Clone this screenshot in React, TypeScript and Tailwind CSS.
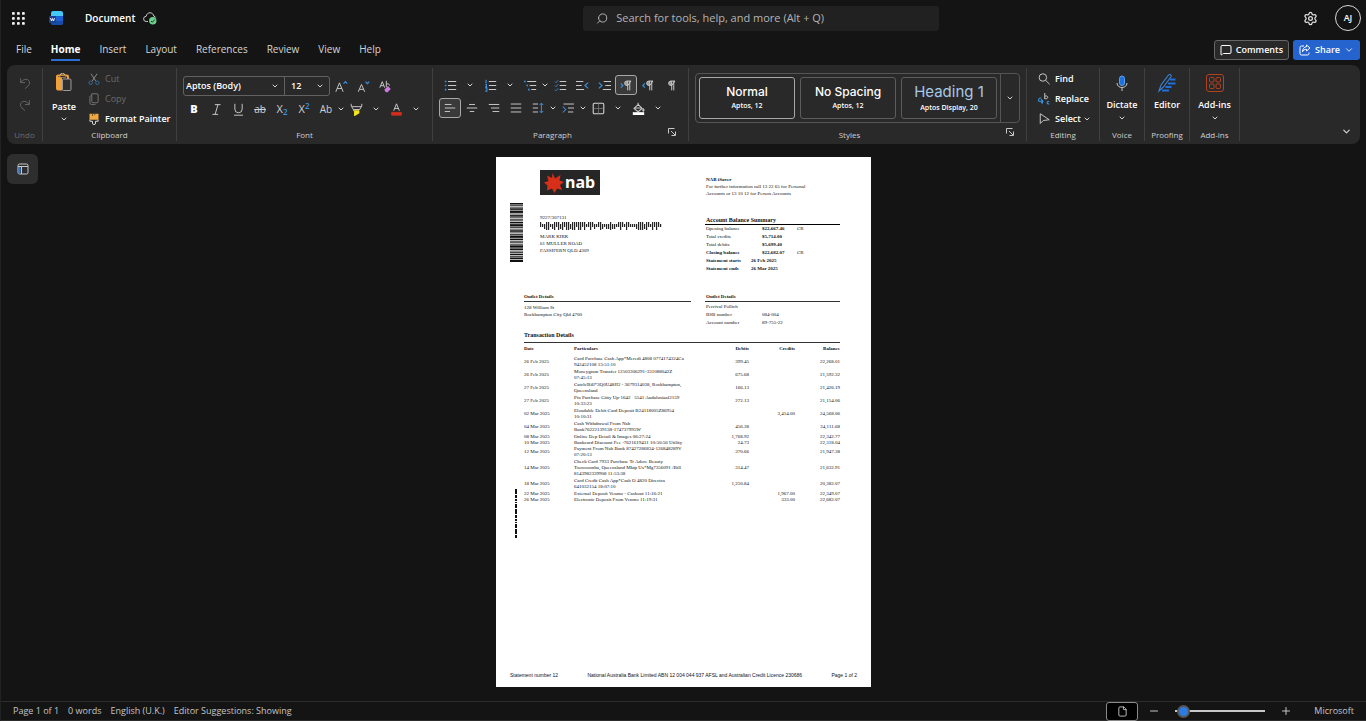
import React from 'react'
import { ChevronDown, Minus, Plus, Search, Settings, MessageSquare, File } from 'lucide-react'

type IconProps = { children: React.ReactNode; size?: number }

const Svg = ({ children, size = 16 }: IconProps) => (
  <svg width={size} height={size} viewBox="0 0 16 16" fill="none" stroke="#c8c8c8" strokeWidth="1" aria-hidden="true" className="shrink-0">
    {children}
  </svg>
)

const Chevron = () => <ChevronDown size={8} strokeWidth={3} className="shrink-0 text-[#d6d6d6]" />

const IconButton = ({ label, active, children }: { label: string; active?: boolean; children: React.ReactNode }) => (
  <button
    type="button"
    aria-label={label}
    className={
      active
        ? 'flex h-5 w-[22px] shrink-0 items-center justify-center rounded-[3px] border border-[#a8a8a8] bg-[#3a3a3a]'
        : 'flex h-5 w-[22px] shrink-0 items-center justify-center rounded-[3px]'
    }
  >
    {children}
  </button>
)

const More = ({ label, wide }: { label: string; wide?: boolean }) => (
  <button
    type="button"
    aria-label={label}
    className={wide ? 'flex h-5 w-[18px] items-center justify-center' : 'flex h-5 w-2 items-center justify-center'}
  >
    <Chevron />
  </button>
)

type GroupProps = { label: string; width: string; dim?: boolean; launcher?: boolean; children: React.ReactNode }

const Group = ({ label, width, dim, launcher, children }: GroupProps) => (
  <section className={`${width} relative flex shrink-0 flex-col border-r border-[#404040]`}>
    <div className="min-h-0 flex-1">{children}</div>
    <div className={`text-center text-[8px] leading-3 ${dim ? 'text-[#6b6b6b]' : 'text-[#d0d0d0]'} ${launcher ? 'pr-4' : ''}`}>
      {label}
    </div>
    {launcher && (
      <button type="button" aria-label={`${label} settings`} className="absolute right-3 bottom-[5px]">
        <svg width="8" height="8" viewBox="0 0 8 8" fill="none" stroke="#c8c8c8" aria-hidden="true">
          <path d="M.5 5.5v-5h6M3 3l4 4M7.5 3.5v4h-4" />
        </svg>
      </button>
    )}
  </section>
)

const Header = () => (
  <header className="flex h-9 items-center">
    <div className="flex flex-1 items-center">
      <button type="button" aria-label="App launcher" className="ml-[11px]">
        <svg width="13" height="13" viewBox="0 0 13 13" fill="#f0f0f0" aria-hidden="true">
          {[0, 5, 10].map((y) => [0, 5, 10].map((x) => <rect key={`${x}-${y}`} x={x} y={y} width="2.8" height="2.8" rx=".9" />))}
        </svg>
      </button>
      <svg className="ml-6" width="14" height="16" viewBox="0 0 14 16" aria-hidden="true">
        <rect x="2" y="1" width="12" height="14" rx="2.5" fill="#1b62d6" />
        <path d="M2 6V3.5A2.5 2.5 0 0 1 4.500 1H11.500A2.500 2.500 0 0 1 14 3.500V6z" fill="#45c8f5" />
        <path d="M2 11h12v1.500A2.500 2.500 0 0 1 11.500 15h-7A2.500 2.500 0 0 1 2 12.500z" fill="#174ca8" />
        <rect y="6" width="7" height="7" rx="1" fill="#1d3f8f" />
        <path d="M1.500 8l1 3 1-2.500 1 2.500 1-3" stroke="#fff" strokeWidth=".9" fill="none" />
      </svg>
      <span className="ml-[22px] text-[10px] font-semibold text-white">Document</span>
      <svg className="ml-2" width="14" height="14" viewBox="0 0 14 14" fill="none" aria-hidden="true">
        <path d="M5 10.500H3.200a2.600 2.600 0 0 1 0-5.200C3.500 3 5 1.800 7 1.800s3.500 1.200 3.800 3.400c1 .1 1.700.6 2 1.300" stroke="#c8c8c8" />
        <circle cx="9.800" cy="9.800" r="3.700" fill="#6fd08c" />
        <path d="M8 10l1.300 1.300 2.500-2.800" stroke="#173a22" />
      </svg>
    </div>
    <label className="flex h-[25px] w-[356px] items-center gap-2 rounded-[3px] bg-[#212121] pl-[13px]">
      <Search size={13} strokeWidth={1.8} className="-scale-x-100 text-[#bdbdbd]" />
      <input
        type="text"
        aria-label="Search"
        placeholder="Search for tools, help, and more (Alt + Q)"
        className="w-full bg-transparent text-[11px] text-white outline-none placeholder:text-[#b4b4b4]"
      />
    </label>
    <div className="flex w-[427px] items-center justify-end gap-[17px] pr-[5px]">
      <button type="button" aria-label="Settings">
        <Settings size={15} strokeWidth={2} className="text-[#e0e0e0]" />
      </button>
      <button type="button" className="h-[26px] w-[26px] rounded-full border border-[#d8d8d8] text-[9px] font-semibold text-white">
        AJ
      </button>
    </div>
  </header>
)

const tabs = ['File', 'Home', 'Insert', 'Layout', 'References', 'Review', 'View', 'Help']

const Tabs = () => (
  <div className="flex h-[27px] items-center pr-[6px] pl-[15px]">
    <nav className="flex flex-1 gap-[19px] self-start text-[10px] leading-[14px] text-[#d6d6d6]">
      {tabs.map((tab) => (
        <a
          key={tab}
          href="#"
          className={tab === 'Home' ? 'border-b-2 border-[#2b6fd6] pt-[6px] pb-[3px] font-bold text-white' : 'border-b-2 border-transparent pt-[6px] pb-[3px]'}
        >
          {tab}
        </a>
      ))}
    </nav>
    <button type="button" className="flex h-5 items-center gap-1 rounded-[3px] border border-[#666] bg-[#292929] px-[5px] text-[9px] font-semibold text-white">
      <MessageSquare size={12} strokeWidth={2} />
      Comments
    </button>
    <button type="button" className="ml-1 flex h-5 items-center gap-1 rounded-[3px] bg-[#2564cf] px-[6px] text-[9px] font-semibold text-white">
      <svg width="12" height="12" viewBox="0 0 12 12" fill="none" stroke="#fff" aria-hidden="true">
        <path d="M5 2H2.500A1.500 1.500 0 0 0 1 3.500v6A1.500 1.500 0 0 0 2.500 11h6A1.500 1.500 0 0 0 10 9.500V8.500M7.500 1l3.500 3-3.500 3V5.300C5.500 5.300 4.300 6 3.500 7.800 3.700 4.800 5 3 7.500 2.700z" />
      </svg>
      Share
      <ChevronDown size={10} strokeWidth={2} />
    </button>
  </div>
)

const UndoGroup = () => (
  <Group label="Undo" width="w-9" dim>
    <div className="flex flex-col items-center gap-2 pt-2">
      <button type="button" aria-label="Undo">
        <Svg size={14}>
          <path d="M3 2.500v5h5M3.300 7.200C6 3.500 10 3 12 5s1.500 4.500-.500 6.300L8 14.500" stroke="#6b6b6b" />
        </Svg>
      </button>
      <button type="button" aria-label="Redo">
        <Svg size={14}>
          <path d="M13 2.500v5H8M12.700 7.200C10 3.500 6 3 4 5s-1.500 4.500.500 6.300L8 14.500" stroke="#6b6b6b" />
        </Svg>
      </button>
    </div>
  </Group>
)

const ClipboardGroup = () => (
  <Group label="Clipboard" width="w-[134px]">
    <div className="flex">
      <button type="button" className="flex w-[42px] flex-col items-center pt-[5px] text-[9px] leading-4 font-semibold text-white">
        <svg width="16" height="19" viewBox="0 0 16 19" fill="none" aria-hidden="true">
          <path d="M6.500 16.500H2A1 1 0 0 1 1 15.500v-12a1 1 0 0 1 1-1h9a1 1 0 0 1 1 1V6" stroke="#efa23b" strokeWidth="2" />
          <path d="M2 4h4v12H2z" fill="#efa23b" />
          <path d="M4.500 2a2 2 0 0 1 4 0" stroke="#e8c79a" />
          <path d="M4 2.500h5.500v2H4z" fill="#292929" stroke="#e5a455" strokeWidth=".6" />
          <rect x="6.500" y="6" width="8.500" height="11.500" rx="1" fill="#303030" stroke="#9a9a9a" />
        </svg>
        <span className="mt-[7px]">Paste</span>
        <Chevron />
      </button>
      <div className="flex flex-col pt-px pl-[3px] text-[9px] leading-5">
        <button type="button" disabled className="flex items-center gap-[5px] text-[#6b6b6b]">
          <Svg size={12}>
            <path d="M4 1l6.500 10M12 1L5.500 11" stroke="#8a8a8a" strokeWidth="1.300" />
            <circle cx="3.500" cy="13" r="2.300" stroke="#3b6a9c" strokeWidth="1.300" />
            <circle cx="12.500" cy="13" r="2.300" stroke="#3b6a9c" strokeWidth="1.300" />
          </Svg>
          Cut
        </button>
        <button type="button" disabled className="flex items-center gap-[5px] text-[#6b6b6b]">
          <Svg size={12}>
            <path d="M5 1h7a1.500 1.500 0 0 1 1.500 1.500v9A1.500 1.500 0 0 1 12 13H6.500A1.500 1.500 0 0 1 5 11.500zM5 3.500c-1.500 0-2.500.5-2.500 2V13A2.500 2.500 0 0 0 5 15.500h5" stroke="#747474" strokeWidth="1.300" />
          </Svg>
          Copy
        </button>
        <button type="button" className="flex items-center gap-[5px] font-semibold whitespace-nowrap text-white">
          <Svg size={12}>
            <path d="M2 1h12v8H2z" fill="#f0a840" stroke="none" />
            <path d="M6 1v3M9 1v2" stroke="#5c3b0c" />
            <path d="M2.500 9v2h3.500v3.500l2 1 2-1V11h3.500V9" stroke="#dcdcdc" strokeWidth="1.300" />
          </Svg>
          Format Painter
        </button>
      </div>
    </div>
  </Group>
)

const FontGroup = () => (
  <Group label="Font" width="w-[256px]">
    <div className="pt-2 pl-[6px]">
      <div className="flex items-center">
        <div className="flex rounded-[3px] border border-[#616161] text-[9px] font-semibold text-white">
          <label className="relative flex items-center">
            <select aria-label="Font name" className="h-[18px] w-[100px] appearance-none bg-transparent pl-[2px] outline-none">
              <option>Aptos (Body)</option>
            </select>
            <span className="pointer-events-none absolute right-[5px]"><Chevron /></span>
          </label>
          <label className="relative flex items-center border-l border-[#616161]">
            <select aria-label="Font size" className="h-[18px] w-[44px] appearance-none bg-transparent pl-[6px] outline-none">
              <option>12</option>
            </select>
            <span className="pointer-events-none absolute right-[5px]"><Chevron /></span>
          </label>
        </div>
        <div className="flex">
          <IconButton label="Grow font">
            <Svg size={13}>
              <path d="M1 14.500L5.500 3.500l4.500 11M2.700 10.500h5.600" strokeWidth="1.200" />
              <path d="M10.500 4.500l2.300-2.500 2.300 2.500" stroke="#3a93e0" strokeWidth="1.400" />
            </Svg>
          </IconButton>
          <IconButton label="Shrink font">
            <Svg size={13}>
              <path d="M1.500 14.500L5.500 5.500l4 9M3 11.500h5" strokeWidth="1.200" />
              <path d="M10.500 2l2.300 2.500L15.100 2" stroke="#3a93e0" strokeWidth="1.400" />
            </Svg>
          </IconButton>
          <IconButton label="Clear formatting">
            <Svg size={13}>
              <path d="M1 9.500L4 2l3 7.500M2 7h4M9 1v7.500M9 5.500c1-1.500 4-1 4 1.300" strokeWidth="1.200" />
              <path d="M6.500 12L11 7.500l3.500 3.500-4 4H8.500z" fill="#d07be0" stroke="none" />
            </Svg>
          </IconButton>
        </div>
      </div>
      <div className="mt-[3px] flex items-center text-[11px] leading-4 text-[#d0d0d0]">
        <IconButton label="Bold"><span className="font-extrabold text-white">B</span></IconButton>
        <IconButton label="Italic">
          <Svg size={13}><path d="M6 2h7M3 14h7M9.800 2L6.300 14" strokeWidth="1.200" /></Svg>
        </IconButton>
        <IconButton label="Underline">
          <Svg size={13}><path d="M3.500 1v6.500a4.500 4.500 0 0 0 9 0V1M2.500 15h11" strokeWidth="1.200" /></Svg>
        </IconButton>
        <IconButton label="Strikethrough"><span className="text-[10px] line-through">ab</span></IconButton>
        <IconButton label="Subscript"><span>X<sub className="text-[8px] font-semibold text-[#3a93e0]">2</sub></span></IconButton>
        <IconButton label="Superscript"><span>X<sup className="text-[8px] font-semibold text-[#3a93e0]">2</sup></span></IconButton>
        <IconButton label="Change case"><span className="text-[10px]">Ab</span></IconButton>
        <More label="Case options" />
        <IconButton label="Highlight">
          <Svg size={13}>
            <path d="M5 9h6.500v3.500L6 16H5z" fill="#f8e71c" stroke="none" />
            <path d="M1.500 1v2.500L4 8h8l2.500-4.500V1M2.500 4.500h11M4.500 8v2" strokeWidth="1.200" />
          </Svg>
        </IconButton>
        <More label="Highlight colors" wide />
        <IconButton label="Font color">
          <Svg size={13}>
            <path d="M4.500 9.500L8 1l3.500 8.500M5.700 6.700h4.600" strokeWidth="1.200" />
            <path d="M2 11.500h12V15H2z" fill="#d22e1c" stroke="#d22e1c" />
          </Svg>
        </IconButton>
        <More label="Font colors" wide />
      </div>
    </div>
  </Group>
)

const Pilcrow = () => (
  <>
    <path d="M9.500 2.500h-1a2.700 2.700 0 0 0 0 5.500h1z" fill="#9a9a9a" stroke="none" />
    <path d="M9.500 14V2.500M12 14V2.500M13.500 2.500H8.500a2.700 2.700 0 0 0 0 5.500h1z" strokeWidth="1.200" />
  </>
)

const ParagraphGroup = () => (
  <Group label="Paragraph" width="w-[256px]" launcher>
    <div className="pt-[7px] pl-[6px]">
      <div className="flex items-center">
        <IconButton label="Bullets">
          <Svg size={13}>
            <path d="M5 3h10M5 8h10M5 13h10" strokeWidth="1.300" />
            <path d="M1 3h2M1 8h2M1 13h2" stroke="#3a93e0" strokeWidth="2" />
          </Svg>
        </IconButton>
        <More label="Bullet library" wide />
        <IconButton label="Numbering">
          <Svg size={13}>
            <path d="M6 3h9M6 8h9M6 13h9" strokeWidth="1.300" />
            <path d="M2.500 1v4M1.500 6.500h1.500v3H1.500M1.500 11h2v4h-2" stroke="#3a93e0" strokeWidth="1.400" />
          </Svg>
        </IconButton>
        <More label="Number library" wide />
        <IconButton label="Multilevel list">
          <Svg size={13}>
            <path d="M4 3h11M7 8h8M9 13h6" strokeWidth="1.300" />
            <path d="M0 3h2M3 8h2M5 13h2" stroke="#3a93e0" strokeWidth="2" />
          </Svg>
        </IconButton>
        <More label="List library" />
        <IconButton label="Checklist">
          <Svg size={13}>
            <path d="M7 3h8M7 8h8M7 13h8" strokeWidth="1.300" />
            <path d="M1 3l1.500 1.500L5 1.500M1 8l1.500 1.500L5 6.500M1 13l1.500 1.500L5 11.500" stroke="#3a93e0" />
          </Svg>
        </IconButton>
        <IconButton label="Decrease indent">
          <Svg size={13}>
            <path d="M0 3h9M0 8h7M0 13h10" strokeWidth="1.300" />
            <path d="M15 4.500L11 8l4 3.500" stroke="#3a93e0" strokeWidth="1.400" />
          </Svg>
        </IconButton>
        <IconButton label="Increase indent">
          <Svg size={13}>
            <path d="M7 3h9M9 8h7M6 13h10" strokeWidth="1.300" />
            <path d="M1 4.500L5 8l-4 3.500" stroke="#3a93e0" strokeWidth="1.400" />
          </Svg>
        </IconButton>
        <IconButton label="Left to right" active>
          <Svg size={13}>
            <Pilcrow />
            <path d="M1 5.500L3.500 8 1 10.500" stroke="#3a93e0" strokeWidth="1.400" />
          </Svg>
        </IconButton>
        <IconButton label="Right to left">
          <Svg size={13}>
            <Pilcrow />
            <path d="M3.500 5.500L1 8l2.500 2.500" stroke="#3a93e0" strokeWidth="1.400" />
          </Svg>
        </IconButton>
        <IconButton label="Show marks"><Svg size={13}><Pilcrow /></Svg></IconButton>
      </div>
      <div className="mt-[3px] flex items-center">
        <IconButton label="Align left" active>
          <Svg size={12}><path d="M1 3.300h9M1 8h14M1 12.700h7" strokeWidth="1.300" /></Svg>
        </IconButton>
        <IconButton label="Align center">
          <Svg size={12}><path d="M4 3.300h8M1 8h14M5 12.700h6" strokeWidth="1.300" /></Svg>
        </IconButton>
        <IconButton label="Align right">
          <Svg size={12}><path d="M6 12.700h9M1 3.300h14M4 8h11" strokeWidth="1.300" /></Svg>
        </IconButton>
        <IconButton label="Justify">
          <Svg size={12}><path d="M1 2.700h14M1 8h14M1 13.300h14" strokeWidth="1.300" /></Svg>
        </IconButton>
        <IconButton label="Line spacing">
          <Svg size={12}>
            <path d="M1 2.700h7M1 8h7M1 13.300h7" strokeWidth="1.300" />
            <path d="M12.500 1.500v13M10 4l2.500-2.500L15 4M10 12l2.500 2.500L15 12" stroke="#3a93e0" strokeWidth="1.300" />
          </Svg>
        </IconButton>
        <More label="Spacing options" />
        <IconButton label="Special indent">
          <Svg size={12}>
            <path d="M2 2.700h14M8 8h8M8 13.300h7" strokeWidth="1.300" />
            <path d="M1 6l4 4-4 4" stroke="#3a93e0" strokeWidth="1.400" />
          </Svg>
        </IconButton>
        <More label="Indent options" />
        <IconButton label="Borders">
          <Svg size={13}>
            <rect x="1.500" y="1.500" width="13" height="13" rx="1.500" stroke="#d8d8d8" strokeWidth="1.300" />
            <path d="M8 2v12M2 8h12" stroke="#777" />
          </Svg>
        </IconButton>
        <More label="Border options" wide />
        <IconButton label="Shading">
          <Svg size={13}>
            <path d="M7.500 1v4M7.500 3l5 5-5 4-5-4zM3.500 7.500h8" strokeWidth="1.300" />
            <path d="M14 8c1.500 2 1 3.500 0 3.500s-1.500-1.500 0-3.500" fill="#c8c8c8" />
            <path d="M1 12.500h14V16H1z" fill="#fff" stroke="none" />
          </Svg>
        </IconButton>
        <More label="Shading colors" wide />
      </div>
    </div>
  </Group>
)

const StylesGroup = () => (
  <Group label="Styles" width="w-[338px]" launcher>
    <div className="mx-[6px] mt-[5px] flex rounded-[4px] border border-[#555]">
      <div className="flex flex-1 gap-[5px] p-[3px] text-white">
        <button type="button" className="flex h-[42px] w-24 flex-col items-center justify-center rounded-[3px] border border-[#a8a8a8]">
          <span className="font-['Inter',sans-serif] text-[12px] leading-4 font-medium">Normal</span>
          <span className="text-[7px] leading-3 font-semibold">Aptos, 12</span>
        </button>
        <button type="button" className="flex h-[42px] w-24 flex-col items-center justify-center rounded-[3px] border border-[#5c5c5c]">
          <span className="font-['Inter',sans-serif] text-[12px] leading-4 font-medium whitespace-nowrap">No Spacing</span>
          <span className="text-[7px] leading-3 font-semibold">Aptos, 12</span>
        </button>
        <button type="button" className="flex h-[42px] w-24 flex-col items-center justify-center rounded-[3px] border border-[#5c5c5c]">
          <span className="font-['Inter',sans-serif] text-[15px] leading-5 text-[#a5c9e8]">Heading 1</span>
          <span className="text-[7px] leading-3 font-semibold">Aptos Display, 20</span>
        </button>
      </div>
      <button type="button" aria-label="More styles" className="flex w-[19px] items-center justify-center border-l border-[#555]">
        <Chevron />
      </button>
    </div>
  </Group>
)

const EditingGroup = () => (
  <Group label="Editing" width="w-[73px]">
    <div className="flex flex-col pt-px pl-[11px] text-[9px] leading-5 font-semibold text-white">
      <button type="button" className="flex items-center gap-[5px]">
        <Svg size={12}>
          <circle cx="6.500" cy="6" r="5" strokeWidth="1.300" />
          <path d="M10.200 9.800L15.500 15" strokeWidth="1.300" />
        </Svg>
        Find
      </button>
      <button type="button" className="flex items-center gap-[5px]">
        <Svg size={12}>
          <path d="M9 0v8M9 5c1-2 4-1 4 .800S10 8.500 9 7" strokeWidth="1.300" />
          <path d="M4.500 7C2 6 0 8.500 1 11h4.500M4 8.500L6.500 11 4 13.500M6 9v5M15 11.500c-3-1.500-4.500 3.500 0 3" stroke="#3a93e0" strokeWidth="1.400" />
        </Svg>
        Replace
      </button>
      <button type="button" className="flex items-center gap-[5px]">
        <Svg size={12}><path d="M3 1v13l4-4 8-1z" strokeWidth="1.300" strokeLinejoin="round" /></Svg>
        Select
        <span className="-ml-[3px]"><Chevron /></span>
      </button>
    </div>
  </Group>
)

const BigButton = ({ label, menu, children }: { label: string; menu?: boolean; children: React.ReactNode }) => (
  <button type="button" className="flex w-full flex-col items-center pt-[5px] text-[9px] leading-4 font-semibold whitespace-nowrap text-white">
    <span className="mb-1 flex h-5 items-center">{children}</span>
    {label}
    {menu && <span className="mt-px"><Chevron /></span>}
  </button>
)

const Ribbon = () => (
  <div className="mx-[6px] mt-[2px] flex rounded-lg bg-[#292929] py-[3px]">
    <div className="flex h-[73px] flex-1">
      <UndoGroup />
      <ClipboardGroup />
      <FontGroup />
      <ParagraphGroup />
      <StylesGroup />
      <EditingGroup />
      <Group label="Voice" width="w-[45px]">
        <BigButton label="Dictate" menu>
          <svg width="12" height="17" viewBox="0 0 12 17" fill="none" aria-hidden="true">
            <rect x="3.500" y="1" width="5" height="9.500" rx="2.500" fill="#1f6fdc" stroke="#59a2ec" />
            <path d="M1 8c0 6 10 6 10 0M6 12.500V16" stroke="#c8c8c8" />
          </svg>
        </BigButton>
      </Group>
      <Group label="Proofing" width="w-[45px]">
        <BigButton label="Editor">
          <svg width="20" height="20" viewBox="0 0 20 20" fill="none" stroke="#3a86dc" aria-hidden="true">
            <path d="M2 18L4 12 11.500 2c1-1.200 3.500 0 2.500 1.700L6.500 14z" strokeWidth="1.100" />
            <path d="M13 6.500h5.500M11 10.500h7.500M8.500 14h6M5 17.500h7" strokeWidth="2.200" stroke="#1f6fdc" />
          </svg>
        </BigButton>
      </Group>
      <Group label="Add-ins" width="w-[50px]">
        <BigButton label="Add-ins" menu>
          <svg width="18" height="18" viewBox="0 0 18 18" fill="none" stroke="#b5401f" aria-hidden="true">
            <rect x=".5" y=".5" width="17" height="17" rx="2.500" />
            <rect x="3.500" y="3.500" width="4.500" height="4.500" rx="1" />
            <rect x="10" y="3.500" width="4.500" height="4.500" rx="1" />
            <rect x="3.500" y="10" width="4.500" height="4.500" rx="1" />
            <rect x="10" y="10" width="4.500" height="4.500" rx="1" />
          </svg>
        </BigButton>
      </Group>
    </div>
    <button type="button" aria-label="Collapse ribbon" className="mr-2 mb-1 self-end">
      <ChevronDown size={11} strokeWidth={2.5} className="text-[#d6d6d6]" />
    </button>
  </div>
)

// f = full bar, u = upper half, d = lower half, t = short tracker
const postBars = 'utdfftdfufdfuffdffuffuftufudtufdtddfddtufutfutttdfffdfutfufut'

const PostBarcode = () => (
  <svg width="122" height="9" viewBox="0 0 122 9" fill="#222" aria-hidden="true">
    {postBars.split('').map((bar, i) => (
      <rect
        key={i}
        x={i * 2}
        y={bar === 'f' || bar === 'u' ? 1 : 3}
        width="1.2"
        height={bar === 'f' ? 8 : bar === 't' ? 3 : 5}
      />
    ))}
  </svg>
)

const sideBars = [2, 1, 1, 2, 3, 1, 2, 1, 1, 1, 2, 3, 1, 1, 2, 1, 1, 3, 2, 1, 1, 1, 3, 2, 1, 1, 2, 1, 2, 3]

const SideBarcode = () => {
  let y = 0
  return (
    <svg width="13" height="59" viewBox="0 0 13 75" preserveAspectRatio="none" fill="#111" aria-hidden="true">
      {sideBars.map((h, i) => {
        const top = y
        y += h + 0.9
        return <rect key={i} y={top} width="13" height={h} />
      })}
    </svg>
  )
}

const balances = [
  { name: 'Opening balance', value: '$22,667.46', cr: 'CR' },
  { name: 'Total credits', value: '$5,714.00', cr: '' },
  { name: 'Total debits', value: '$5,699.40', cr: '' },
  { name: 'Closing balance', value: '$22,682.07', cr: 'CR' },
]

const transactions = [
  { date: '26 Feb 2025', lines: ['Card Purchase Cash App*Meredi 4808 0774174324Ca', '942452108 13:51:10'], debit: '399.45', credit: '', balance: '22,268.01' },
  { date: '26 Feb 2025', lines: ['Moneygram Transfer 12503306291-331088042Z', '07:45:13'], debit: '675.68', credit: '', balance: '21,592.32' },
  { date: '27 Feb 2025', lines: ['Catch/Bill*3Q0U48JI2 - 3679314038, Rockhampton,', 'Queensland'], debit: '166.13', credit: '', balance: '21,426.19' },
  { date: '27 Feb 2025', lines: ['Pin Purchase Gitty Up-1642   5541 Andalusiaal2159', '10:33:23'], debit: '272.13', credit: '', balance: '21,154.06' },
  { date: '02 Mar 2025', lines: ['Eloadable Debit Card Deposit B24118005Z86954', '10:10:31'], debit: '', credit: '3,414.00', balance: '24,568.06' },
  { date: '04 Mar 2025', lines: ['Cash Withdrawal From Nab', 'Bank76222139138-174737995W'], debit: '456.38', credit: '', balance: '24,111.68' },
  { date: '08 Mar 2025', lines: ['Online Dep Detail & Images 06:27:24'], debit: '1,768.92', credit: '', balance: '22,342.77' },
  { date: '10 Mar 2025', lines: ['Bankcard Discount Fee -7621619431 10:50:56 Utility'], debit: '24.73', credit: '', balance: '22,318.04' },
  { date: '12 Mar 2025', lines: ['Payment From Nab Bank 87427286834-126848289V', '07:20:13'], debit: '370.66', credit: '', balance: '21,947.38' },
  { date: '14 Mar 2025', lines: ['Check Card 7933 Purchase Tr Adore Beauty', 'Toowoomba, Queensland Mktp Us*Mg7356091 /Bill', '8143982339908 11:53:38'], debit: '314.47', credit: '', balance: '21,632.91' },
  { date: '18 Mar 2025', lines: ['Card Credit Cash App*Cash O 4820 Directca', '641032154 18:07:10'], debit: '1,250.84', credit: '', balance: '20,382.07' },
  { date: '22 Mar 2025', lines: ['External Deposit Venmo - Cashout 11:16:21'], debit: '', credit: '1,967.00', balance: '22,349.07' },
  { date: '26 Mar 2025', lines: ['Electronic Deposit From Venmo 11:19:31'], debit: '', credit: '333.00', balance: '22,682.07' },
]

const StatementHeader = () => (
  <div className="flex pr-[31px] pl-[14px]">
    <div className="mt-[33px] shrink-0">
      <SideBarcode />
    </div>
    <div className="ml-[17px] flex-1">
      <div className="flex h-[25px] w-[60px] items-center bg-[#262626] pl-1">
        <svg width="20" height="20" viewBox="0 0 20 20" fill="#d6301a" aria-hidden="true">
          <path d="M8.500 0l2.500 5.500L16.500 2l-1 5.500 4.500 1.500-4 3 2 5-5-1.500-2.500 4.500-2.500-4.500L3 17.500l.500-5L0 9.500l4.500-1.500L3 2.500l5 2.500z" />
        </svg>
        <span className="ml-px pb-[2px] font-['Noto_Sans',sans-serif] text-[16px] leading-5 font-bold text-white">nab</span>
      </div>
      <p className="mt-5 leading-[6px]">9227/307131</p>
      <PostBarcode />
      <address className="mt-[3px] leading-[7px] not-italic">
        MARK KIRK<br />
        61 MULLER ROAD<br />
        FASSIFERN QLD 4309
      </address>
    </div>
    <div className="w-[135px] pt-[6px]">
      <p className="pl-px leading-[7px]">
        <b>NAB iSaver</b><br />
        For further information call 13 22 65 for Personal<br />
        Accounts or 13 10 12 for Person Accounts
      </p>
      <h2 className="mt-5 border-b border-black pl-px text-[6px] leading-[7px] font-bold">Account Balance Summary</h2>
      <table className="w-full leading-[8px]">
        <tbody>
          {balances.map((row) => (
            <tr key={row.name}>
              <td className={row.name === 'Closing balance' ? 'w-[57px] pl-px font-bold' : 'w-[57px] pl-px'}>{row.name}</td>
              <td className="font-bold">{row.value}</td>
              <td className="w-[43px]">{row.cr}</td>
            </tr>
          ))}
        </tbody>
      </table>
      <dl className="grid grid-cols-[45px_1fr] pl-px leading-[8px] font-bold">
        <dt>Statement starts</dt>
        <dd>26 Feb 2025</dd>
        <dt>Statement ends</dt>
        <dd>26 Mar 2025</dd>
      </dl>
    </div>
  </div>
)

const Statement = () => (
  <article className="flex min-h-[530px] w-[375px] flex-col bg-white pt-[13px] font-['Liberation_Serif',serif] text-[5px] text-[#111]">
    <StatementHeader />
    <div className="mt-5 flex justify-between pr-[31px] pl-[28px]">
      <div className="w-[167px]">
        <h3 className="border-b border-[#333] leading-[8px] font-bold">Outlet Details</h3>
        <p className="pt-[2px] leading-[7px]">
          128 William St<br />
          Rockhampton City Qld 4700
        </p>
      </div>
      <div className="w-[135px]">
        <h3 className="border-b border-[#333] pl-px leading-[8px] font-bold">Outlet Details</h3>
        <dl className="grid grid-cols-[56px_1fr] pt-px pl-px leading-[8px]">
          <dt className="col-span-2">Percival Pollich</dt>
          <dt>BSB number</dt>
          <dd>084-004</dd>
          <dt>Account number</dt>
          <dd>89-755-22</dd>
        </dl>
      </div>
    </div>
    <h2 className="mt-1 pb-[3px] pl-[28px] text-[6px] leading-[8px] font-bold">Transaction Details</h2>
    <div className="flex pr-[31px] pl-[19px]">
      <svg className="mt-[147px] shrink-0" width="2" height="49" viewBox="0 0 2 49" aria-hidden="true">
        <path d="M1 0v49" stroke="#111" strokeWidth="2" strokeDasharray="5 1 3 1 2 1 1 1 4 1" />
      </svg>
      <table className="ml-[7px] flex-1 self-start border-t border-[#333] leading-[6px]">
        <thead>
          <tr className="h-[13px] text-left">
            <th className="w-[50px]">Date</th>
            <th>Particulars</th>
            <th className="w-[40px] text-right">Debits</th>
            <th className="w-[46px] text-right">Credits</th>
            <th className="w-[45px] text-right">Balance</th>
          </tr>
        </thead>
        <tbody>
          {transactions.map((t) => (
            <tr key={t.lines[0]}>
              <td>{t.date}</td>
              <td className={t.lines.length > 1 ? 'pb-px whitespace-pre' : 'whitespace-pre'}>{t.lines.join('\n')}</td>
              <td className="text-right">{t.debit}</td>
              <td className="text-right">{t.credit}</td>
              <td className="text-right">{t.balance}</td>
            </tr>
          ))}
        </tbody>
      </table>
    </div>
    <footer className="mt-auto flex justify-between px-[14px] pb-[9px] font-['Liberation_Sans',sans-serif] text-[5px] leading-[6px]">
      <span>Statement number 12</span>
      <span>National Australia Bank Limited ABN 12 004 044 937 AFSL and Australian Credit Licence 230686</span>
      <span>Page 1 of 2</span>
    </footer>
  </article>
)

const StatusBar = () => (
  <footer className="flex h-5 items-center border-y border-[#2c2c2c] pr-3 pl-3 text-[9px] text-[#c4c4c4]">
    <div className="flex flex-1 gap-[9px]">
      <span>Page 1 of 1</span>
      <span>0 words</span>
      <span>English (U.K.)</span>
      <span>Editor Suggestions: Showing</span>
    </div>
    <button type="button" aria-label="Print layout" className="flex h-[19px] w-8 items-center justify-center rounded-[3px] border border-[#8a8a8a] bg-black">
      <File size={11} strokeWidth={2} />
    </button>
    <button type="button" aria-label="Zoom out" className="ml-[10px]"><Minus size={12} strokeWidth={2} /></button>
    <input
      type="range"
      aria-label="Zoom"
      min={0}
      max={100}
      defaultValue={2}
      className="mx-[15px] h-[2px] w-[90px] appearance-none bg-[#c8c8c8] [&::-webkit-slider-thumb]:h-[13px] [&::-webkit-slider-thumb]:w-[13px] [&::-webkit-slider-thumb]:appearance-none [&::-webkit-slider-thumb]:rounded-full [&::-webkit-slider-thumb]:border-2 [&::-webkit-slider-thumb]:border-[#555] [&::-webkit-slider-thumb]:bg-[#2b7be4]"
    />
    <button type="button" aria-label="Zoom in" className="mr-[22px]"><Plus size={12} strokeWidth={2} /></button>
    <span>Microsoft</span>
  </footer>
)

const App = () => {
  return (
    <div className="flex min-h-screen flex-col border-l border-[#222] bg-[#141414] font-['Open_Sans',sans-serif]">
      <Header />
      <Tabs />
      <Ribbon />
      <main className="relative flex flex-1 justify-center pt-[13px] pb-[14px]">
        <button
          type="button"
          aria-label="Navigation pane"
          className="absolute top-[10px] left-[6px] flex h-[30px] w-[31px] items-center justify-center rounded-md bg-[#2e2e2e]"
        >
          <svg width="12" height="12" viewBox="0 0 12 12" fill="none" stroke="#c8c8c8" aria-hidden="true">
            <rect x="1" y="1" width="10" height="10" rx="1.500" />
            <path d="M1 3.500h10M4.500 3.500V11" />
            <path d="M2.500 4v6.500" stroke="#2b7be4" strokeWidth="2" />
          </svg>
        </button>
        <Statement />
      </main>
      <StatusBar />
    </div>
  )
}

export default App
